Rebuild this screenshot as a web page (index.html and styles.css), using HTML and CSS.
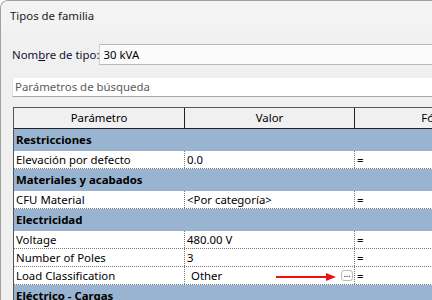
FILE: index.html
```html
<!DOCTYPE html>
<html>
<head>
<meta charset="utf-8">
<link rel="stylesheet" href="styles.css">
</head>
<body>
<div class="window">
  <div class="titlebar">Tipos de familia</div>
  <div class="content">
    <div class="type-row">
      <span class="type-label">Nom<u>b</u>re de tipo:</span>
      <div class="type-input">30 kVA</div>
    </div>
    <div class="search">Parámetros de búsqueda</div>
    <div class="grid">
      <div class="row head">
        <div class="cell">Parámetro</div>
        <div class="cell">Valor</div>
        <div class="cell">Fórmula</div>
      </div>
      <div class="row group"><div class="gcell">Restricciones</div></div>
      <div class="row data">
        <div class="cell">Elevación por defecto</div>
        <div class="cell">0.0</div>
        <div class="cell">=</div>
      </div>
      <div class="row group"><div class="gcell">Materiales y acabados</div></div>
      <div class="row data">
        <div class="cell">CFU Material</div>
        <div class="cell">&lt;Por categoría&gt;</div>
        <div class="cell">=</div>
      </div>
      <div class="row group"><div class="gcell">Electricidad</div></div>
      <div class="row data">
        <div class="cell">Voltage</div>
        <div class="cell">480.00 V</div>
        <div class="cell">=</div>
      </div>
      <div class="row data">
        <div class="cell">Number of Poles</div>
        <div class="cell">3</div>
        <div class="cell">=</div>
      </div>
      <div class="row data">
        <div class="cell">Load Classification</div>
        <div class="cell value-combo">
          <span class="combo-text">Other</span>
          <span class="arrow"><span class="arrow-line"></span><span class="arrow-head"></span></span>
          <span class="dots-btn">...</span>
        </div>
        <div class="cell">=</div>
      </div>
      <div class="row group"><div class="gcell">Eléctrico - Cargas</div></div>
    </div>
  </div>
</div>
</body>
</html>
```
FILE: styles.css
```css
* { box-sizing: border-box; }
html, body {
  margin: 0;
  padding: 0;
  width: 432px;
  height: 300px;
  overflow: hidden;
  background: #ffffff;
  font-family: "Noto Sans", "Liberation Sans", sans-serif;
  font-size: 11.4px;
  color: #000;
}
.window {
  width: 440px;
  height: 310px;
  border-left: 1px solid #a0a0a0;
  border-top: 1px solid #a0a0a0;
  border-top-left-radius: 8px;
  background: #f0f0f0;
  overflow: hidden;
}
.titlebar {
  height: 30px;
  background: #f3f3f3;
  padding-left: 9px;
  line-height: 29px;
  color: #1a1a1a;
}
.content {
  padding: 0 0 0 11px;
}
.type-row {
  display: flex;
  align-items: center;
  margin-top: 13px;
  height: 21px;
}
.type-label {
  flex: 0 0 81px;
  white-space: nowrap;
  color: #101030;
}
.type-input {
  flex: 1;
  height: 21px;
  background: #fbfbfb;
  border-top: 1px solid #b9b9b9;
  border-bottom: 1px solid #b9b9b9;
  border-left: 1px solid #d0d0d0;
  padding-left: 3px;
  line-height: 19px;
}
.search {
  margin-top: 13px;
  height: 19px;
  background: #ffffff;
  border-left: 1px solid #e3e3e3;
  border-bottom: 1px solid #a8a8a8;
  padding-left: 2px;
  line-height: 18px;
  color: #5a5a5a;
}
.grid {
  margin-top: 10px;
  margin-left: 1px;
  width: 520px;
  border-top: 1px solid #555;
  border-left: 1px solid #555;
  background: #fff;
}
.row {
  display: grid;
  grid-template-columns: 171px 170px 178px;
}
.head {
  height: 21px;
  background: #f0f0f0;
  border-bottom: 1px solid #222;
}
.head .cell {
  border-right: 1px solid #222;
  text-align: center;
  line-height: 20px;
  white-space: nowrap;
}
.group {
  display: block;
  height: 22px;
  background: #99b4d1;
}
.gcell {
  font-weight: bold;
  padding-left: 2px;
  line-height: 22px;
}
.data {
  height: 18px;
  border-bottom: 1px dotted #777;
}
.data .cell {
  border-right: 1px dotted #777;
  padding-left: 2px;
  line-height: 17px;
  white-space: nowrap;
}
.data .cell:last-child { border-right: none; }
.value-combo {
  position: relative;
}
.combo-text {
  padding-left: 4px;
}
.dots-btn {
  position: absolute;
  left: 156px;
  top: 3px;
  width: 12px;
  height: 11px;
  border: 1px solid #bcbcbc;
  border-radius: 3px;
  background: #fff;
  font-size: 9px;
  line-height: 5px;
  text-align: center;
  color: #000;
}
.arrow {
  position: absolute;
  left: 91px;
  top: 8px;
  width: 61px;
  height: 6px;
}
.arrow-line {
  position: absolute;
  left: 0;
  top: 1px;
  width: 52px;
  height: 2px;
  background: #ee1111;
}
.arrow-head {
  position: absolute;
  left: 50px;
  top: -2px;
  width: 0;
  height: 0;
  border-top: 4px solid transparent;
  border-bottom: 4px solid transparent;
  border-left: 10px solid #ee1111;
}
```
